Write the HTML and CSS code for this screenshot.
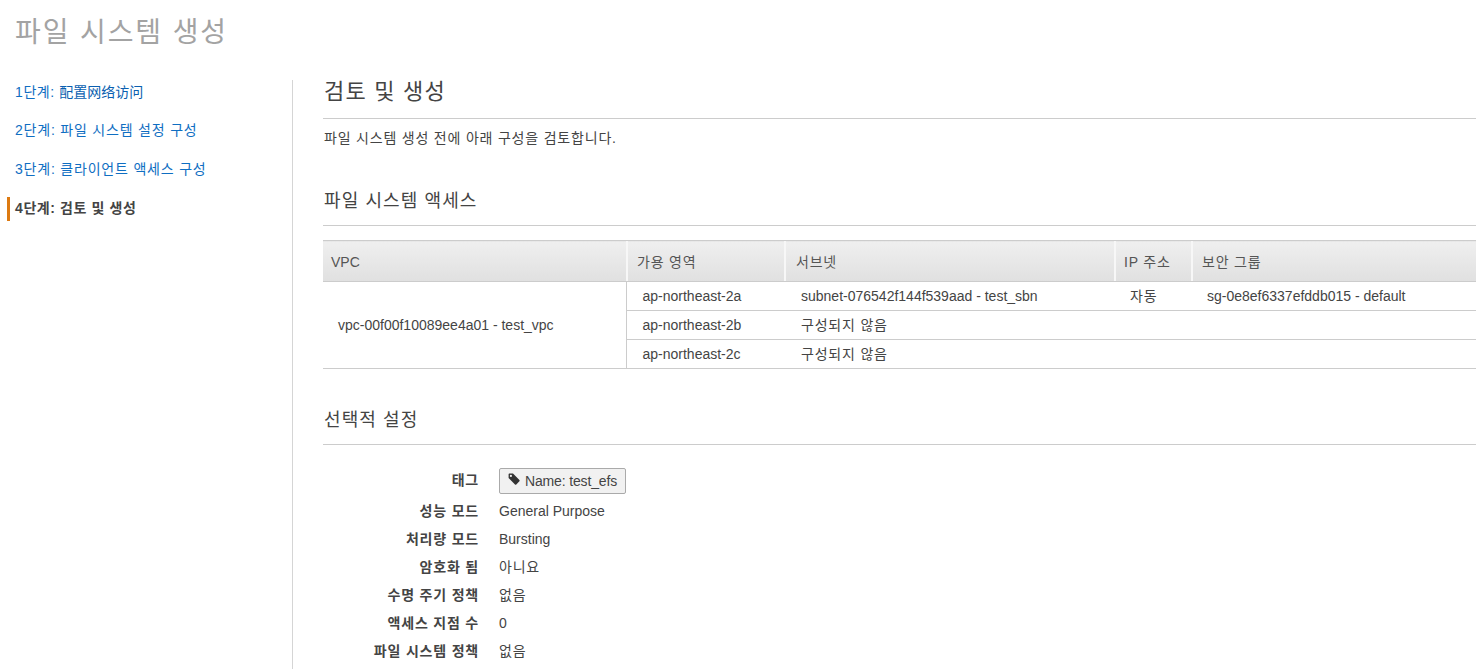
FILE: index.html
```html
<!DOCTYPE html>
<html lang="ko">
<head>
<meta charset="utf-8">
<title>파일 시스템 생성</title>
<link rel="stylesheet" href="styles.css">
</head>
<body>
<h1 class="page-title">파일 시스템 생성</h1>
<div class="wizard">
  <nav class="steps">
    <a class="step" href="#"><span class="ko tight">1단계: </span><span lang="zh">配置网络访问</span></a>
    <a class="step ko" href="#">2단계: 파일 시스템 설정 구성</a>
    <a class="step ko" href="#">3단계: 클라이언트 액세스 구성</a>
    <span class="step current ko">4단계: 검토 및 생성</span>
  </nav>
  <main class="content">
    <h2 class="main-heading">검토 및 생성</h2>
    <p class="intro ko">파일 시스템 생성 전에 아래 구성을 검토합니다.</p>
    <h3 class="section-heading">파일 시스템 액세스</h3>
    <table class="access">
      <colgroup>
        <col class="c-vpc"><col class="c-az"><col class="c-subnet"><col class="c-ip"><col>
      </colgroup>
      <thead>
        <tr><th>VPC</th><th class="ko">가용 영역</th><th class="ko th-subnet">서브넷</th><th class="ko th-ip">IP 주소</th><th class="ko">보안 그룹</th></tr>
      </thead>
      <tbody>
        <tr>
          <td class="vpc" rowspan="3">vpc-00f00f10089ee4a01 - test_vpc</td>
          <td>ap-northeast-2a</td><td class="td-subnet">subnet-076542f144f539aad - test_sbn</td><td class="ko">자동</td><td>sg-0e8ef6337efddb015 - default</td>
        </tr>
        <tr><td>ap-northeast-2b</td><td class="ko td-subnet">구성되지 않음</td><td></td><td></td></tr>
        <tr><td>ap-northeast-2c</td><td class="ko td-subnet">구성되지 않음</td><td></td><td></td></tr>
      </tbody>
    </table>
    <h3 class="section-heading optional">선택적 설정</h3>
    <dl class="settings">
      <dt class="tag-label ko">태그</dt>
      <dd class="tag-value"><span class="tag"><svg class="tag-icon" viewBox="0 0 12 12" aria-hidden="true"><path d="M0.6 1.6C0.6 1 1 .6 1.6 .6H5L11.4 7C11.8 7.4 11.8 7.9 11.4 8.3L8.3 11.4C7.9 11.8 7.4 11.8 7 11.4L.6 5ZM2.9 1.8A1.1 1.1 0 1 0 2.9 4A1.1 1.1 0 1 0 2.9 1.8Z" fill-rule="evenodd"/></svg>Name: test_efs</span></dd>
      <dt class="ko">성능 모드</dt><dd>General Purpose</dd>
      <dt class="ko">처리량 모드</dt><dd>Bursting</dd>
      <dt class="ko">암호화 됨</dt><dd class="ko">아니요</dd>
      <dt class="ko">수명 주기 정책</dt><dd class="ko">없음</dd>
      <dt class="ko">액세스 지점 수</dt><dd>0</dd>
      <dt class="ko">파일 시스템 정책</dt><dd class="ko">없음</dd>
    </dl>
  </main>
</div>
</body>
</html>
```
FILE: styles.css
```css
* { box-sizing: border-box; }
html, body { height: 100%; }
body {
  margin: 0;
  width: 1476px;
  height: 669px;
  overflow: hidden;
  background: #fff;
  color: #444;
  font-family: "Liberation Sans", "Noto Sans CJK KR", sans-serif;
  font-size: 14px;
  line-height: 20px;
}
.ko { letter-spacing: 0.8px; }
.ko.tight { letter-spacing: 0.6px; }
.page-title {
  margin: 0;
  padding: 13px 15px 0;
  height: 80px;
  font-size: 28px;
  line-height: 40px;
  font-weight: 400;
  letter-spacing: 1.9px;
  color: #a3a3a3;
}
.wizard { display: flex; height: 589px; }
.steps {
  flex: 0 0 293px;
  border-right: 1px solid #d5d5d5;
  display: flex;
  flex-direction: column;
  gap: 13px;
  padding-top: 1px;
}
.step {
  display: block;
  height: 26px;
  line-height: 21px;
  padding-left: 15px;
  color: #0f6ec2;
  text-decoration: none;
}
.step.current {
  margin: -1px 0 0 7px;
  height: 24px;
  line-height: 22px;
  padding-left: 5px;
  border-left: 3px solid #dd7a12;
  color: #444;
  font-weight: 700;
  letter-spacing: 0.6px;
}
.step span[lang="zh"] {
  font-family: "Noto Sans CJK SC", sans-serif;
  color: #0a5fb0;
}
.content { flex: 1; padding-left: 30px; min-width: 0; }
.main-heading {
  margin: 0;
  height: 39px;
  padding-left: 1px;
  border-bottom: 1px solid #ccc;
  font-size: 22px;
  line-height: 24px;
  font-weight: 400;
  letter-spacing: 1.2px;
  color: #444;
}
.intro { margin: 0; padding: 9px 0 0 1px; height: 64px; }
.section-heading {
  margin: 0;
  height: 43px;
  border-bottom: 1px solid #ccc;
  font-size: 18px;
  line-height: 26px;
  padding: 5px 0 0 1px;
  font-weight: 400;
  letter-spacing: 1.1px;
  color: #444;
}
.access {
  width: 100%;
  margin-top: 14px;
  border-collapse: collapse;
  table-layout: fixed;
}
.c-vpc { width: 303px; }
.c-az { width: 158px; }
.c-subnet { width: 330px; }
.c-ip { width: 77px; }
.access thead tr { height: 41px; }
.access th {
  padding: 2px 7px 0 11px;
  text-align: left;
  font-weight: 400;
  color: #555;
  background: linear-gradient(#efefef, #e0e0e0);
  border-top: 1px solid #ccc;
  border-bottom: 1px solid #ccc;
  box-shadow: inset 2px 0 #f7f7f7;
}
.access th:first-child { padding-left: 8px; box-shadow: none; }
.access th.th-subnet { padding-left: 12px; }
.access th.th-ip { padding-left: 10px; }
.access tbody tr { height: 29px; }
.access td {
  padding: 0 15px 0 16px;
  border-bottom: 1px solid #ccc;
  white-space: nowrap;
}
.access td.vpc { padding-left: 15px; border-right: 1px solid #ccc; }
.access td.td-subnet { padding-left: 17px; }
.optional { margin-top: 37px; height: 39px; padding-top: 1px; }
.settings {
  display: grid;
  grid-template-columns: 156px 1fr;
  column-gap: 20px;
  grid-template-rows: 30px;
  grid-auto-rows: 28px;
  margin: 22px 0 0;
  align-items: center;
}
.settings dt { text-align: right; font-weight: 700; color: #444; }
.settings dd { margin: 0; }
.settings .tag-label { align-self: start; line-height: 26px; }
.settings .tag-value { align-self: start; padding-top: 1px; line-height: 0; }
.tag {
  display: inline-flex;
  align-items: center;
  height: 26px;
  padding: 0 8px;
  line-height: 20px;
  letter-spacing: -0.15px;
  background: #f1f1f1;
  border: 1px solid #aaa;
  border-radius: 2px;
}
.tag-icon { width: 12px; height: 12px; margin-right: 5px; margin-top: -5px; fill: #333; }
```
